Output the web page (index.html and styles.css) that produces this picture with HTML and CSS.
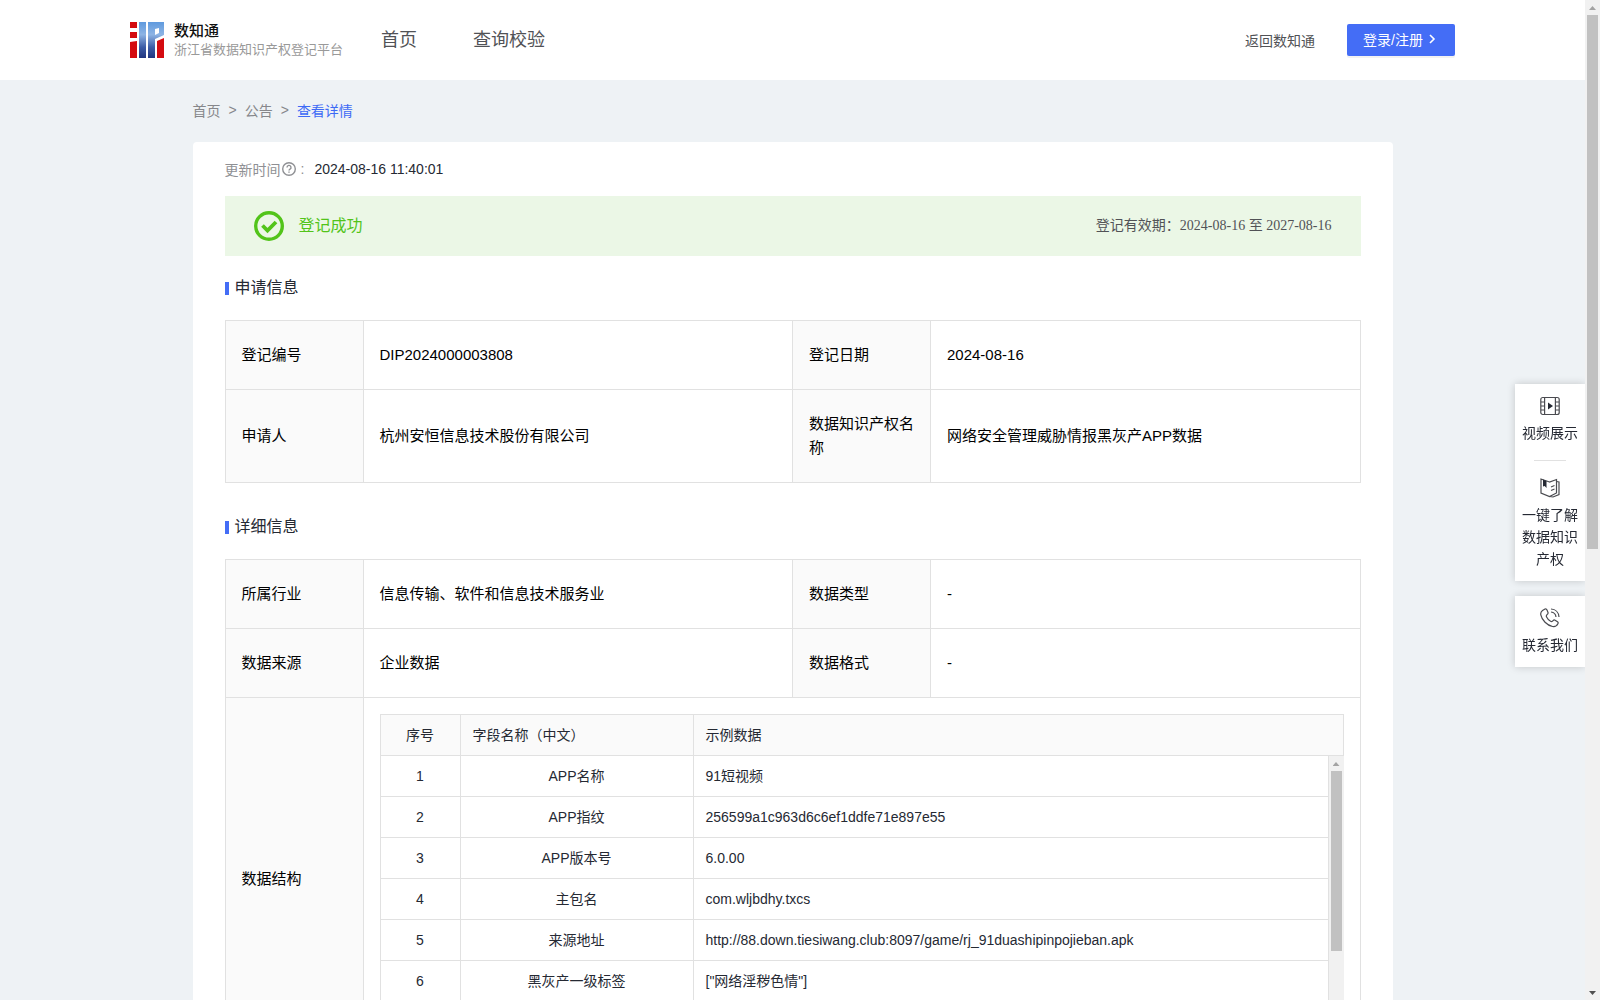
FILE: index.html
```html
<!DOCTYPE html>
<html lang="zh-CN">
<head>
    <meta charset="UTF-8">
    <meta name="viewport" content="width=device-width, initial-scale=1.0">
    <title>浙江省数据知识产权登记平台</title>
    <link rel="stylesheet" href="styles.css">
</head>
<body>

<div class="page">
    <header class="header">
        <a class="logo" href="#">
            <svg width="34" height="36" viewBox="0 0 34 36">
                <defs>
                    <linearGradient id="blue" gradientUnits="userSpaceOnUse" x1="0" y1="0" x2="0" y2="36">
                        <stop offset="0" stop-color="#5f9ade"/>
                        <stop offset="0.35" stop-color="#8db4e4"/>
                        <stop offset="0.7" stop-color="#3c5ca6"/>
                        <stop offset="1" stop-color="#21357f"/>
                    </linearGradient>
                </defs>
                <path fill="#d40b10" d="M0 0h7v6H0zM0 10h7v6H0zM0 20l7-1v17H0zM27 19l7-3v20h-7z"/>
                <path fill="url(#blue)" d="M9 0h7v36H9zM18 0h16v13l-9 4v19h-7zM25 7v6l4-2V6z"/>
            </svg>
            <span class="logo-text">
                <strong>数知通</strong>
                <small>浙江省数据知识产权登记平台</small>
            </span>
        </a>
        <nav class="nav">
            <a href="#">首页</a>
            <a href="#">查询校验</a>
        </nav>
        <div class="header-right">
            <a href="#">返回数知通</a>
            <button type="button" class="btn-login">登录/注册
                <svg width="14" height="14" viewBox="0 0 14 14"><path d="M5 3l4 4-4 4" fill="none" stroke="#fff" stroke-width="1.6"/></svg>
            </button>
        </div>
    </header>

    <main class="container">
        <!-- 面包屑 -->
        <nav class="breadcrumb">
            <a href="#">首页</a><span>&gt;</span><a href="#">公告</a><span>&gt;</span><a href="#" class="active">查看详情</a>
        </nav>

        <div class="panel">
            <div class="update-time">
                <span>更新时间</span>
                <svg width="16" height="16" viewBox="0 0 16 16" fill="none" stroke="#8f9094" stroke-width="1.4">
                    <circle cx="8" cy="8" r="6.3"/>
                    <path d="M6 6.4a2 2 0 1 1 3 1.7c-.7.4-1 .7-1 1.4M8 10.5v1.3"/>
                </svg>
                <span class="colon">:</span>
                <time>2024-08-16 11:40:01</time>
            </div>

            <!-- 登记状态 -->
            <div class="status">
                <svg width="30" height="30" viewBox="0 0 30 30" fill="none" stroke="#52c41a">
                    <circle cx="15" cy="15" r="13.3" stroke-width="3.4"/>
                    <path d="M8.5 14.5l5 5 8.5-8.5" stroke-width="3.8"/>
                </svg>
                <span class="status-name">登记成功</span>
                <span class="status-date">登记有效期：2024-08-16 至 2027-08-16</span>
            </div>

            <h2 class="title">申请信息</h2>
            <table class="info">
                <colgroup><col class="col-label"><col><col class="col-label"><col></colgroup>
                <tr>
                    <th scope="row">登记编号</th>
                    <td>DIP2024000003808</td>
                    <th scope="row">登记日期</th>
                    <td>2024-08-16</td>
                </tr>
                <tr>
                    <th scope="row">申请人</th>
                    <td>杭州安恒信息技术股份有限公司</td>
                    <th scope="row">数据知识产权名称</th>
                    <td>网络安全管理威胁情报黑灰产APP数据</td>
                </tr>
            </table>

            <h2 class="title title-next">详细信息</h2>
            <table class="info">
                <colgroup><col class="col-label"><col><col class="col-label"><col></colgroup>
                <tr>
                    <th scope="row">所属行业</th>
                    <td>信息传输、软件和信息技术服务业</td>
                    <th scope="row">数据类型</th>
                    <td>-</td>
                </tr>
                <tr>
                    <th scope="row">数据来源</th>
                    <td>企业数据</td>
                    <th scope="row">数据格式</th>
                    <td>-</td>
                </tr>
                <tr>
                    <th scope="row">数据结构</th>
                    <td colspan="3" class="struct">
                        <!-- 表头固定，表体滚动 -->
                        <table class="fields">
                            <colgroup><col class="col-no"><col class="col-name"><col></colgroup>
                            <tr><th>序号</th><th>字段名称（中文）</th><th>示例数据</th></tr>
                        </table>
                        <div class="fields-body">
                            <div class="fields-scroll">
                                <table class="fields">
                                    <colgroup><col class="col-no"><col class="col-name"><col></colgroup>
                                    <tr><td>1</td><td>APP名称</td><td>91短视频</td></tr>
                                    <tr><td>2</td><td>APP指纹</td><td>256599a1c963d6c6ef1ddfe71e897e55</td></tr>
                                    <tr><td>3</td><td>APP版本号</td><td>6.0.00</td></tr>
                                    <tr><td>4</td><td>主包名</td><td>com.wljbdhy.txcs</td></tr>
                                    <tr><td>5</td><td>来源地址</td><td>http://88.down.tiesiwang.club:8097/game/rj_91duashipinpojieban.apk</td></tr>
                                    <tr><td>6</td><td>黑灰产一级标签</td><td>["网络淫秽色情"]</td></tr>
                                </table>
                            </div>
                            <div class="scrollbar">
                                <i class="arrow arrow-up"></i>
                                <div class="track"><div class="thumb thumb-fields"></div></div>
                                <i class="arrow arrow-down"></i>
                            </div>
                        </div>
                    </td>
                </tr>
            </table>
        </div>
    </main>
</div>

<!-- 右侧悬浮栏 -->
<aside class="side">
    <div class="side-box">
        <a href="#">
            <svg width="20" height="20" viewBox="0 0 20 20" fill="none" stroke="#4a4b50" stroke-width="1.2">
                <rect x="0.8" y="1.5" width="18.4" height="17" rx="2"/>
                <path d="M4.6 1.5v17M15.4 1.5v17M1 6h3.6M1 10h3.6M1 14h3.6M15.4 6H19M15.4 10H19M15.4 14H19"/>
                <path d="M8 6.500l5 3.500-5 3.500z" fill="#252933" stroke="none"/>
            </svg>
            <span>视频展示</span>
        </a>
        <hr>
        <a href="#">
            <svg width="20" height="20" viewBox="0 0 20 20" fill="none" stroke="#4a4b50" stroke-width="1.2">
                <path d="M9.500 4L1 1v14l8.500 3.500L16.500 15V1.500z"/>
                <path d="M16.500 3.500l2.500.5v12.500l-6 2.500-3.500-.5"/>
                <path d="M11 9l3.500-1.500M11 12.500l3.500-1.500"/>
                <path d="M3 1.500l3.500 1.500v7L4.700 8 3 8.500z" fill="#252933" stroke="none"/>
            </svg>
            <span>一键了解数据知识产权</span>
        </a>
    </div>
    <div class="side-box">
        <a href="#">
            <svg width="20" height="20" viewBox="0 0 20 20" fill="none" stroke="#4a4b50" stroke-width="1.2">
                <path d="M2.500 2.500L5 1c1-.4 1.600 0 2 1l1 2.500c.3 1 0 1.500-.8 2-1 .7-1.200 1.300-.6 2.500.9 1.900 2.200 3.300 4 4.300 1.200.6 1.800.3 2.500-.6.600-.8 1.200-1 2-.5l2.400 1.500c.8.600.9 1.200.4 2.100-1.200 2.300-3 3.200-5.400 2.700C7 17.200 2 12.300.8 6.800.5 5 1 3.500 2.500 2.500z"/>
                <path d="M11 1c4.500.2 7.700 3.300 8 8M11 4c3 .3 4.700 2 5 5"/>
            </svg>
            <span>联系我们</span>
        </a>
    </div>
</aside>

<div class="scrollbar page-scrollbar">
    <i class="arrow arrow-up"></i>
    <div class="track"><div class="thumb thumb-page"></div></div>
    <i class="arrow arrow-down"></i>
</div>

</body>
</html>
```
FILE: styles.css
```css
* {
    box-sizing: border-box;
}
body {
    display: flex;
    height: 100vh;
    margin: 0;
    overflow: hidden;
    background: #eef2f5;
    font-family: "Liberation Sans", "Noto Sans CJK SC", sans-serif;
    font-size: 14px;
    color: #252933;
}
a {
    color: inherit;
    text-decoration: none;
}
svg {
    display: block;
    flex: none;
}
.page {
    flex: 1;
    min-width: 0;
    overflow-y: auto;
    scrollbar-width: none;
}

/* 滚动条 */
.scrollbar {
    display: flex;
    flex-direction: column;
    flex: none;
    width: 15px;
    background: #f1f1f1;
}
.track {
    flex: 1;
    padding: 0 2px;
}
.thumb {
    background: #c1c1c1;
}
.thumb-page {
    height: 55%;
}
.thumb-fields {
    height: 70%;
}
.arrow {
    height: 15px;
    padding: 6px 4px;
}
.arrow::before {
    content: "";
    display: block;
    height: 4px;
    background: #a3a3a3;
    clip-path: polygon(50% 0, 100% 100%, 0 100%);
}
.arrow-down::before {
    background: #505050;
    clip-path: polygon(0 0, 100% 0, 50% 100%);
}

/* 顶部 */
.header {
    display: flex;
    align-items: center;
    height: 80px;
    padding: 0 130px;
    background: #fff;
    color: #515256;
}
.logo {
    display: flex;
    align-items: center;
    gap: 10px;
}
.logo-text {
    display: flex;
    flex-direction: column;
}
.logo-text strong {
    font-size: 15px;
    font-weight: 500;
    line-height: 20px;
    color: #111;
}
.logo-text small {
    font-size: 13px;
    line-height: 18px;
    color: #999;
}
.nav {
    display: flex;
    gap: 56px;
    margin-left: 38px;
    padding-bottom: 4px;
    font-size: 18px;
}
.header-right {
    display: flex;
    align-items: center;
    gap: 32px;
    margin-left: auto;
}
.btn-login {
    display: flex;
    align-items: center;
    gap: 2px;
    height: 32px;
    padding: 0 16px 2px;
    border: none;
    border-radius: 2px;
    background: #446df6;
    box-shadow: 0 2px 0 rgba(0, 0, 0, 0.05);
    color: #fff;
    font-family: inherit;
    font-size: 14px;
    cursor: pointer;
}

/* 内容 */
.container {
    max-width: 1200px;
    margin: 0 auto;
}
.breadcrumb {
    display: flex;
    align-items: center;
    gap: 8px;
    height: 62px;
    padding-bottom: 2px;
    color: #86878b;
}
.breadcrumb .active {
    color: #3d6af5;
}
.panel {
    padding: 0 32px 32px;
    border-radius: 4px;
    background: #fff;
}
.update-time {
    display: flex;
    align-items: center;
    height: 54px;
    color: #8f9094;
}
.colon {
    margin: 0 10px 0 4px;
}
.update-time time {
    color: #252933;
}
.status {
    display: flex;
    align-items: center;
    height: 60px;
    padding: 0 29px;
    background: #ebf7e6;
}
.status-name,
.status-date {
    padding-bottom: 4px;
}
.status-name {
    margin-left: 15px;
    font-size: 16px;
    color: #52c41a;
}
.status-date {
    margin-left: auto;
    font-family: "Liberation Serif", "Noto Sans CJK SC", serif;
    color: #515256;
}
.title {
    display: flex;
    align-items: center;
    gap: 6px;
    height: 64px;
    margin: 0;
    padding-bottom: 4px;
    font-size: 16px;
    font-weight: 400;
}
.title::before {
    content: "";
    width: 4px;
    height: 13px;
    margin-top: 4px;
    background: #446df6;
}
.title-next {
    margin-top: 12px;
}

/* 信息表格 */
table {
    width: 100%;
    border-collapse: collapse;
    table-layout: fixed;
}
.col-label {
    width: 138px;
}
.info th,
.info td {
    height: 69px;
    padding: 22px 16px;
    border: 1px solid #e1e1e1;
    font-size: 15px;
    font-weight: 400;
    line-height: 24px;
    text-align: left;
    color: #000;
}
.info th {
    background: #fafafa;
}
.info .struct {
    padding: 16px;
}

/* 数据结构表格 */
.col-no {
    width: 80px;
}
.col-name {
    width: 233px;
}
.info .fields th,
.info .fields td {
    height: 41px;
    padding: 8px 12px;
    font-size: 14px;
    color: #252933;
}
.info .fields td:nth-child(-n+2),
.info .fields th:first-child {
    text-align: center;
}
.fields-body {
    display: flex;
    height: 287px;
}
.fields-scroll {
    flex: 1;
    margin-top: -1px;
}

/* 悬浮栏 */
.side {
    position: fixed;
    top: 384px;
    right: 15px;
    display: flex;
    flex-direction: column;
    gap: 15px;
    width: 70px;
}
.side-box {
    padding: 12px 6px 11px;
    background: #fff;
    box-shadow: 0 0 8px rgba(0, 0, 0, 0.18);
}
.side-box a {
    display: flex;
    flex-direction: column;
    align-items: center;
    gap: 6px;
    line-height: 22px;
    text-align: center;
}
.side-box hr {
    width: 32px;
    margin: 16px auto 17px;
    border: none;
    border-top: 1px solid #e1e1e1;
}
.page-scrollbar {
    position: relative;
}
```
